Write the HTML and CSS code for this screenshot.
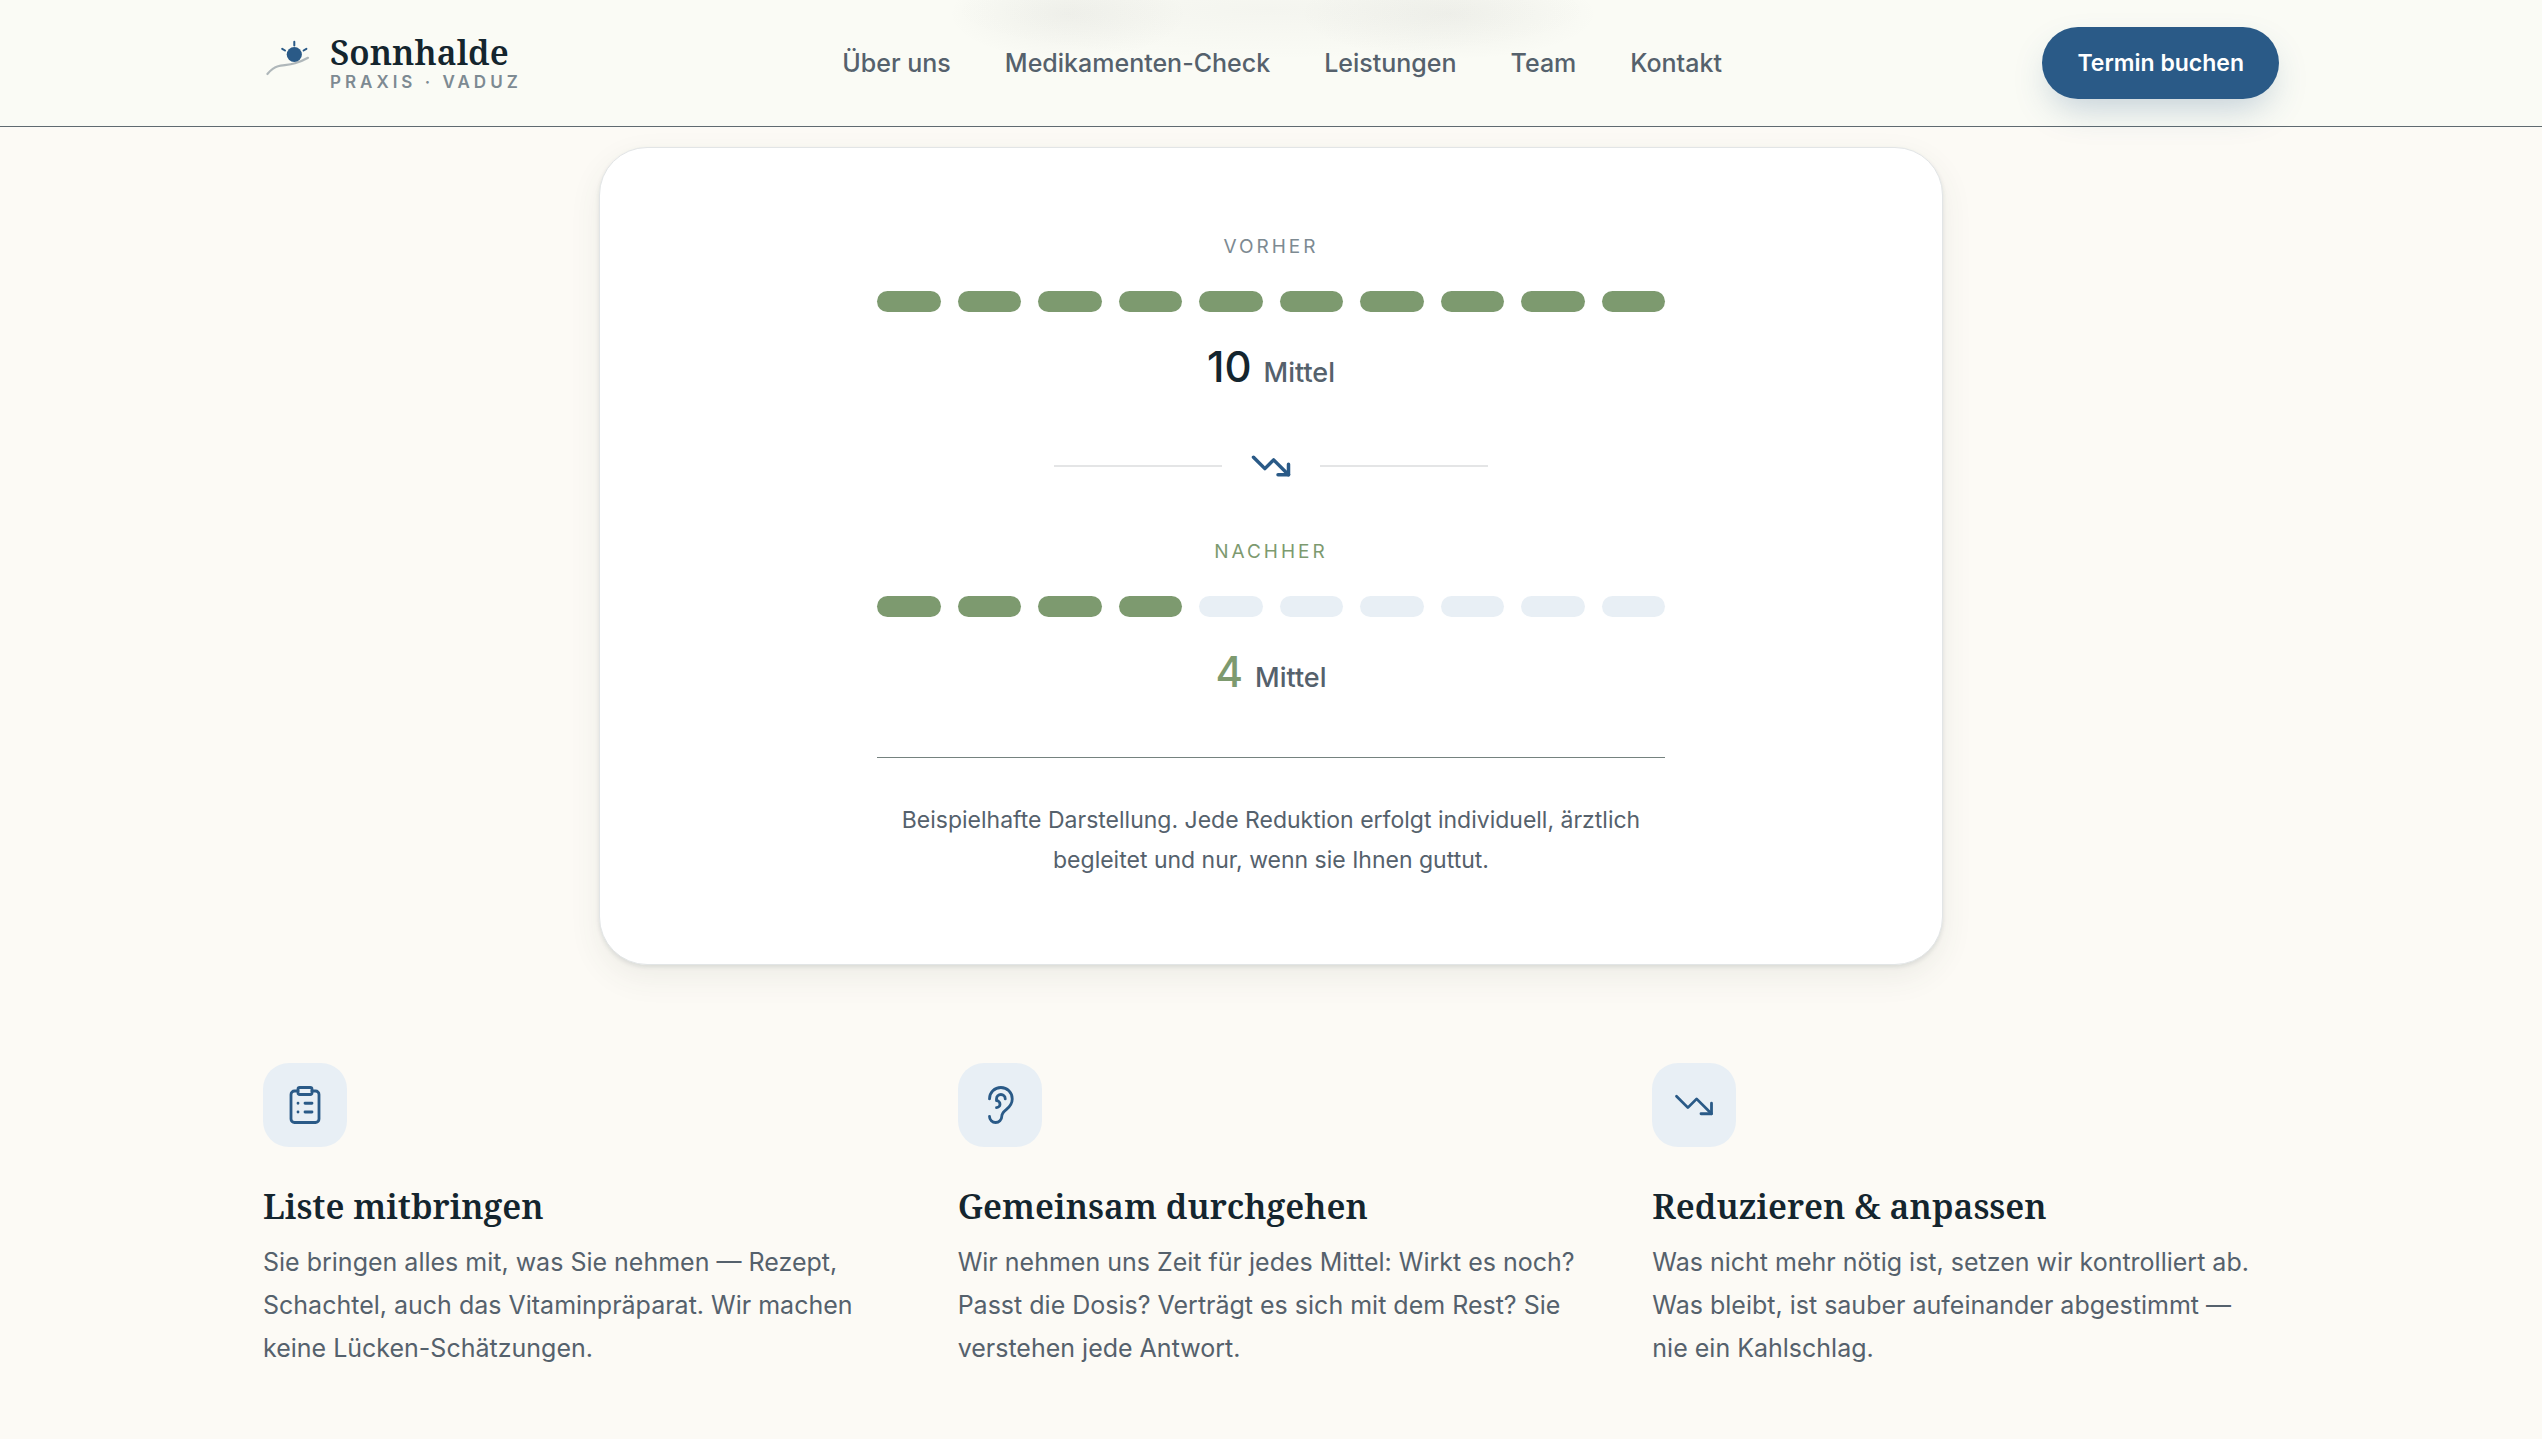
FILE: index.html
```html
<!DOCTYPE html>
<html lang="de">
<head>
  <meta charset="UTF-8">
  <meta name="viewport" content="width=device-width, initial-scale=1">
  <title>Sonnhalde – Praxis Vaduz</title>
  <link rel="stylesheet" href="styles.css">
</head>
<body>
  <header class="header">
    <div class="container header-inner">
      <a href="#" class="brand">
        <svg class="brand-logo" viewBox="0 0 48 48" fill="none" stroke-linecap="round" aria-hidden="true">
          <circle cx="31.3" cy="15.5" r="7.6" fill="#2a5a87"/>
          <path d="M31.3 2.8v3.6M19.2 9.8l2.8 1.7M43.4 9.8l-2.8 1.7" stroke="#2a5a87" stroke-width="2"/>
          <path d="M4.4 35c3.4-4 7-6.800 10.600-7.700 5-1.200 11-1.300 17-3.100 5-1.500 9-3 13-5.400" stroke="#7d8a92" stroke-opacity=".6" stroke-width="2.200"/>
        </svg>
        <span class="brand-text">
          <span class="brand-name">Sonnhalde</span>
          <span class="brand-sub">PRAXIS · VADUZ</span>
        </span>
      </a>
      <nav class="nav">
        <a href="#ueber-uns">Über uns</a>
        <a href="#check">Medikamenten-Check</a>
        <a href="#leistungen">Leistungen</a>
        <a href="#team">Team</a>
        <a href="#kontakt">Kontakt</a>
      </nav>
      <a href="#termin" class="btn">Termin buchen</a>
    </div>
  </header>

  <main class="container" id="check">
    <section class="card">
      <div class="compare">
        <p class="label">VORHER</p>
        <div class="dots">
          <span></span><span></span><span></span><span></span><span></span>
          <span></span><span></span><span></span><span></span><span></span>
        </div>
        <p class="count"><strong>10</strong> Mittel</p>

        <div class="divider">
          <svg class="icon icon-bold" viewBox="0 0 24 24" aria-hidden="true">
            <path d="M16 17h6v-6"/>
            <path d="m22 17-8.500-8.500-5 5L2 7"/>
          </svg>
        </div>

        <p class="label label-after">NACHHER</p>
        <div class="dots">
          <span></span><span></span><span></span><span></span><span class="off"></span>
          <span class="off"></span><span class="off"></span><span class="off"></span><span class="off"></span><span class="off"></span>
        </div>
        <p class="count count-after"><strong>4</strong> Mittel</p>

        <p class="note">Beispielhafte Darstellung. Jede Reduktion erfolgt individuell, ärztlich begleitet und nur, wenn sie Ihnen guttut.</p>
      </div>
    </section>

    <section class="steps">
      <article class="step">
        <div class="tile">
          <svg class="icon" viewBox="0 0 24 24" aria-hidden="true">
            <rect x="8" y="2" width="8" height="4" rx="1"/>
            <path d="M16 4h2a2 2 0 0 1 2 2v14a2 2 0 0 1-2 2H6a2 2 0 0 1-2-2V6a2 2 0 0 1 2-2h2"/>
            <path d="M12 11h4M12 16h4M8 11h.01M8 16h.01"/>
          </svg>
        </div>
        <h3>Liste mitbringen</h3>
        <p>Sie bringen alles mit, was Sie nehmen — Rezept, Schachtel, auch das Vitaminpräparat. Wir machen keine Lücken-Schätzungen.</p>
      </article>
      <article class="step">
        <div class="tile">
          <svg class="icon" viewBox="0 0 24 24" aria-hidden="true">
            <path d="M6 8.500a6.500 6.500 0 1 1 13 0c0 6-6 6-6 10a3.500 3.500 0 1 1-7 0"/>
            <path d="M15 8.500a2.500 2.500 0 0 0-5 0v1a2 2 0 1 1 0 4"/>
          </svg>
        </div>
        <h3>Gemeinsam durchgehen</h3>
        <p>Wir nehmen uns Zeit für jedes Mittel: Wirkt es noch? Passt die Dosis? Verträgt es sich mit dem Rest? Sie verstehen jede Antwort.</p>
      </article>
      <article class="step">
        <div class="tile">
          <svg class="icon" viewBox="0 0 24 24" aria-hidden="true">
            <path d="M16 17h6v-6"/>
            <path d="m22 17-8.500-8.500-5 5L2 7"/>
          </svg>
        </div>
        <h3>Reduzieren &amp; anpassen</h3>
        <p>Was nicht mehr nötig ist, setzen wir kontrolliert ab. Was bleibt, ist sauber aufeinander abgestimmt — nie ein Kahlschlag.</p>
      </article>
    </section>
  </main>
</body>
</html>
```
FILE: styles.css
```css
:root {
  --ink: #14252e;
  --text: #55616c;
  --muted: #7d8a92;
  --blue: #2a5a87;
  --blue-soft: #e8eff5;
  --green: #7d9a6f;
  --bg: #fcfaf5;
}

* {
  box-sizing: border-box;
}

body {
  margin: 0;
  background: var(--bg);
  color: var(--text);
  font-family: Inter, "Liberation Sans", sans-serif;
  font-size: 25px;
  line-height: 43px;
}

h3, p {
  margin: 0;
}

a {
  color: inherit;
  text-decoration: none;
}

.container {
  width: 100%;
  max-width: 2100px;
  margin: 0 auto;
  padding: 0 42px;
}

/* header */
.header {
  position: sticky;
  top: 0;
  z-index: 10;
  border-bottom: 1px solid #5f6a70;
  background:
    radial-gradient(ellipse 120px 46px at 42% 14px, rgba(60, 60, 60, 0.05), transparent),
    radial-gradient(ellipse 330px 50px at 50% 10px, rgba(60, 60, 60, 0.03), transparent),
    radial-gradient(ellipse 150px 46px at 57% 14px, rgba(60, 60, 60, 0.05), transparent),
    #fafbf5;
}

.header-inner {
  display: flex;
  align-items: center;
  justify-content: space-between;
  min-height: 126px;
}

.brand {
  display: flex;
  align-items: center;
  gap: 19px;
}

.brand-logo {
  width: 48px;
  height: 48px;
}

.brand-text {
  display: flex;
  flex-direction: column;
  gap: 2px;
}

.brand-name {
  color: var(--ink);
  font-family: "Noto Serif", "Liberation Serif", serif;
  font-size: 34px;
  font-weight: 600;
  line-height: 36px;
}

.brand-sub {
  color: var(--muted);
  font-size: 17px;
  font-weight: 600;
  letter-spacing: 4px;
  line-height: 20px;
}

.nav {
  display: flex;
  gap: 54px;
  font-weight: 500;
}

.btn {
  padding: 15px 35px;
  border-radius: 36px;
  background: var(--blue);
  box-shadow: 0 16px 36px -8px rgba(42, 90, 135, 0.28);
  color: #fff;
  font-size: 23px;
  font-weight: 600;
  line-height: 42px;
}

/* card */
.card {
  max-width: 1344px;
  margin: 20px auto 0;
  padding: 84px 42px;
  border: 1px solid #e2e5e6;
  border-radius: 48px;
  background: #fff;
  box-shadow: 0 2px 4px rgba(20, 37, 46, 0.1), 0 12px 32px rgba(60, 80, 60, 0.08);
}

.compare {
  max-width: 788px;
  margin: 0 auto;
  text-align: center;
}

.label {
  color: var(--muted);
  font-size: 19px;
  letter-spacing: 3px;
  line-height: 30px;
}

.label-after {
  color: var(--green);
}

.dots {
  display: flex;
  gap: 17px;
  margin-top: 29px;
}

.dots span {
  flex: 1;
  height: 21px;
  border-radius: 11px;
  background: var(--green);
}

.dots .off {
  background: var(--blue-soft);
}

.count {
  display: flex;
  align-items: baseline;
  justify-content: center;
  gap: 12px;
  margin-top: 33px;
  font-size: 27px;
  font-weight: 500;
  line-height: 44px;
}

.count strong {
  color: var(--ink);
  font-size: 42px;
  font-weight: 500;
}

.count-after strong {
  color: var(--green);
}

.divider {
  display: flex;
  align-items: center;
  justify-content: center;
  gap: 28px;
  margin: 50px 0;
}

.divider::before,
.divider::after {
  content: "";
  width: 168px;
  height: 2px;
  background: #e4e5e6;
}

.note {
  margin-top: 57px;
  padding-top: 42px;
  border-top: 1px solid #75827f;
  font-size: 23px;
  line-height: 40px;
}

.icon {
  display: block;
  width: 42px;
  height: 42px;
  fill: none;
  stroke: var(--blue);
  stroke-width: 1.6;
  stroke-linecap: round;
  stroke-linejoin: round;
}

.icon-bold {
  stroke-width: 2;
}

/* steps */
.steps {
  display: grid;
  grid-template-columns: repeat(3, 1fr);
  gap: 68px;
  padding: 98px 0 84px;
}

.tile {
  display: grid;
  place-items: center;
  width: 84px;
  height: 84px;
  border-radius: 26px;
  background: var(--blue-soft);
}

.step h3 {
  margin: 37px 0 13px;
  color: var(--ink);
  font-family: "Noto Serif", "Liberation Serif", serif;
  font-size: 34px;
  font-weight: 600;
  line-height: 44px;
}

.step p {
  max-width: 618px;
}
```
